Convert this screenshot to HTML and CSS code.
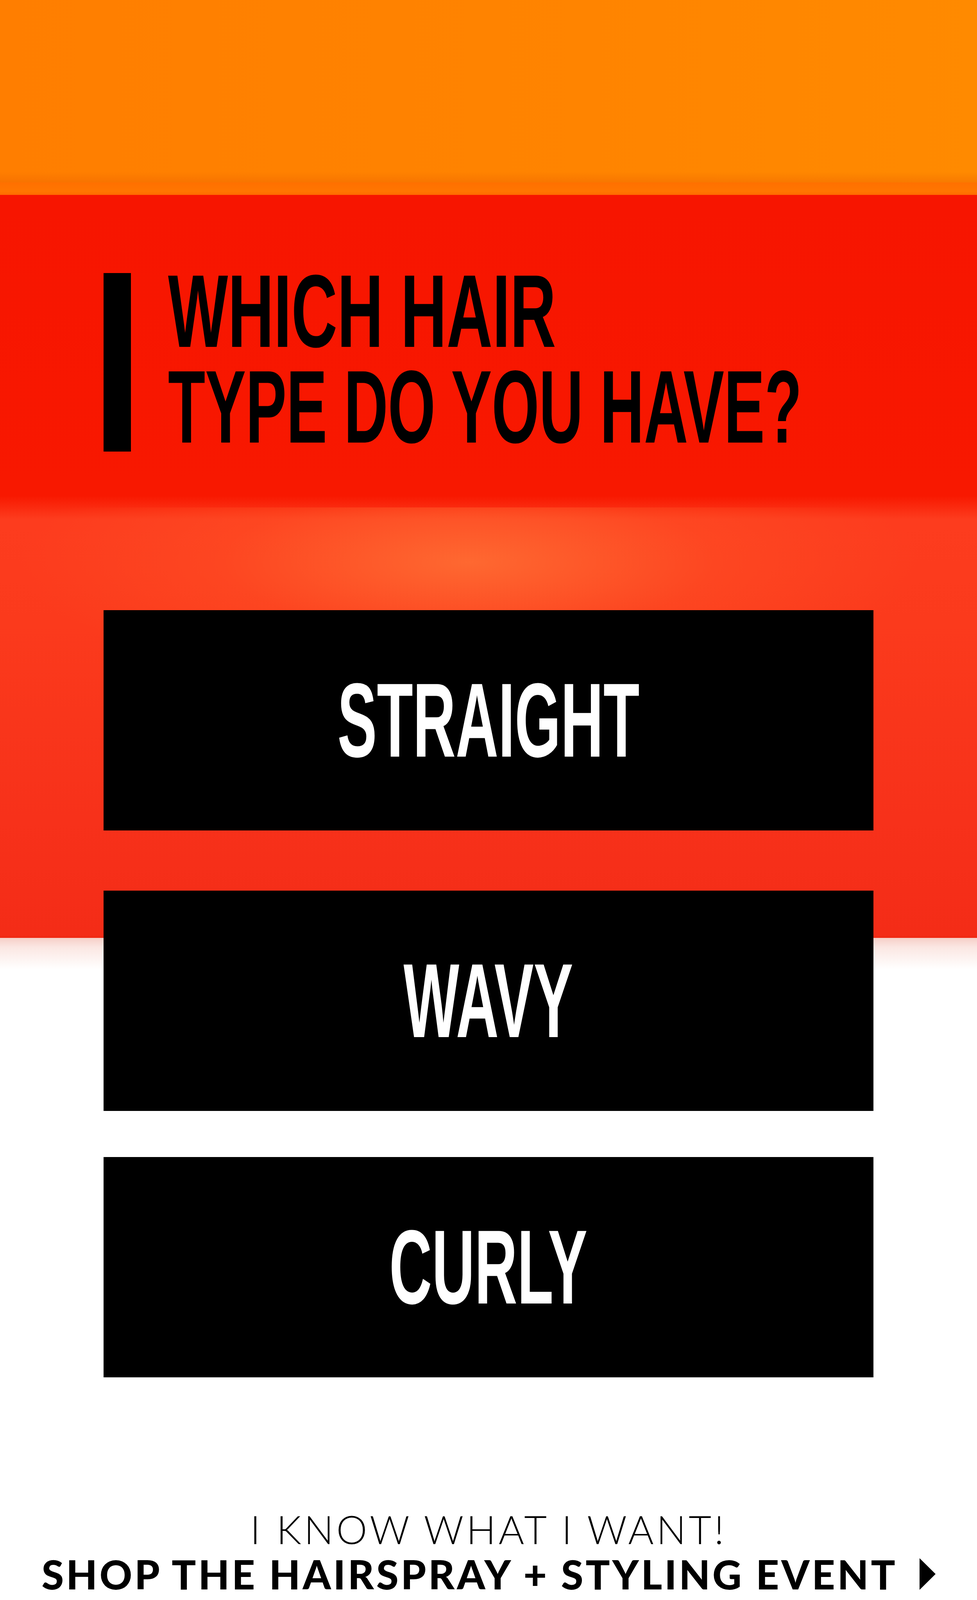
FILE: index.html
```html
<!DOCTYPE html>
<html lang="en">
<head>
    <meta charset="UTF-8">
    <meta name="viewport" content="width=device-width, initial-scale=1.0">
    <title>Which hair type do you have?</title>
    <link rel="stylesheet" href="styles.css">
</head>
<body>
    <div class="page">
        <div class="top-band"></div>

        <section class="quiz">
            <h1 class="question">
                <span class="question-bar"></span>
                <span class="question-text">
                    <span class="question-line">WHICH HAIR</span>
                    <span class="question-line">TYPE DO YOU HAVE?</span>
                </span>
            </h1>

            <div class="options">
                <a href="#" class="option"><span class="option-label">STRAIGHT</span></a>
                <a href="#" class="option"><span class="option-label">WAVY</span></a>
                <a href="#" class="option"><span class="option-label">CURLY</span></a>
            </div>
        </section>

        <footer class="shop">
            <p class="shop-intro">I KNOW WHAT I WANT!</p>
            <a href="#" class="shop-link">
                <span>SHOP THE HAIRSPRAY + STYLING EVENT</span>
                <svg class="shop-arrow" width="41" height="81" viewBox="0 0 41 81">
                    <polygon points="0,0 41,40.5 0,81" fill="#000"/>
                </svg>
            </a>
        </footer>
    </div>
</body>
</html>
```

FILE: styles.css
```css
:root {
    --black: #000;
    --white: #fff;
    --condensed: 'Liberation Sans', Arial, sans-serif;
    --geometric: Lato, 'Noto Sans', sans-serif;
}

* {
    margin: 0;
    padding: 0;
    box-sizing: border-box;
}

body {
    background-color: var(--white);
    color: var(--black);
}

.page {
    width: 2500px;
    overflow: hidden;
}

/* orange strip with a darker seam at the bottom */
.top-band {
    height: 499px;
    background:
        linear-gradient(to bottom, rgba(255, 255, 255, 0) 0, rgba(255, 255, 255, 0) 440px, rgba(235, 95, 0, 0.35) 466px, #ff7000 468px, #ff7600 490px, #ff6a00 499px),
        linear-gradient(to right, #ff7e00, #ff8400 60%, #ff8a00);
}

/* red panel, soft glow under the question, pink fade into white */
.quiz {
    padding-top: 175px;
    background-image:
        radial-gradient(ellipse 1150px 330px at 1200px 140px, rgba(255, 112, 52, 0.85), rgba(255, 90, 40, 0.35) 55%, rgba(255, 60, 30, 0) 100%),
        linear-gradient(to bottom, #f71500 0, #f81800 770px, #fd3c1e 830px, #fb3a1c 1100px, #f7311a 1600px, #f42c17 1895px, #ee2812 1902px),
        linear-gradient(to bottom, #f6cfc8, #fbe7e3 30%, rgba(255, 255, 255, 0));
    background-size: 100% 1102px, 100% 1902px, 100% 80px;
    background-position: 0 800px, 0 0, 0 1902px;
    background-repeat: no-repeat;
}

.question {
    display: flex;
    gap: 95px;
    padding-left: 265px;
    font-family: var(--condensed);
    font-weight: 700;
    font-size: 265px;
    line-height: 245px;
    color: var(--black);
}

.question-bar {
    flex: none;
    width: 70px;
    height: 457px;
    margin-top: 25px;
    background-color: var(--black);
}

.question-line {
    display: block;
    white-space: nowrap;
    transform: scaleX(0.588);
    transform-origin: left center;
}

.question-line:first-child {
    transform: scaleX(0.613);
}

.options {
    display: flex;
    flex-direction: column;
    gap: 118px;
    padding: 0 265px;
    margin-top: 398px;
}

.option {
    display: flex;
    align-items: center;
    justify-content: center;
    height: 564px;
    background-color: var(--black);
    color: var(--white);
    text-decoration: none;
    font-family: var(--condensed);
    font-weight: 700;
    font-size: 270px;
    line-height: 270px;
}

.option:first-child {
    margin-bottom: 36px;
}

.option-label {
    display: inline-block;
    white-space: nowrap;
    transform: scaleX(0.56);
}

.shop {
    padding: 328px 0 8px;
    text-align: center;
    font-family: var(--geometric);
}

.shop-intro {
    font-size: 100px;
    font-weight: 300;
    line-height: 120px;
    letter-spacing: 7px;
}

.shop-link {
    display: flex;
    align-items: center;
    justify-content: center;
    gap: 56px;
    color: var(--black);
    text-decoration: none;
    font-size: 103px;
    font-weight: 900;
    line-height: 110px;
    letter-spacing: 6px;
}

.shop-arrow {
    flex: none;
}
```
